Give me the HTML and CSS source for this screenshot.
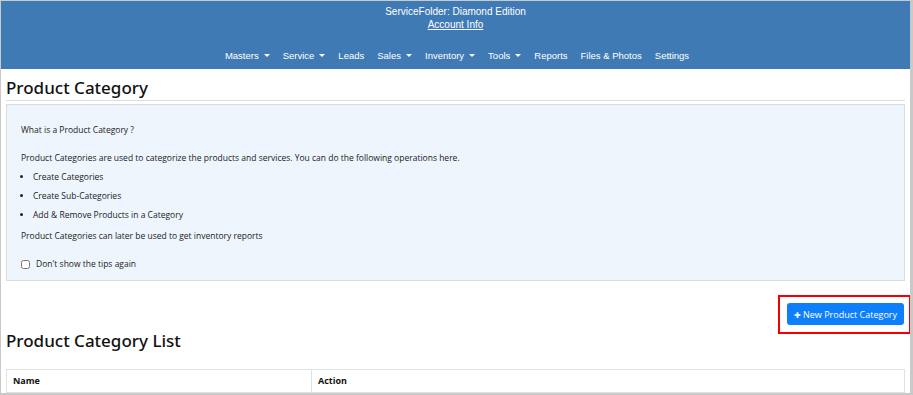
FILE: index.html
```html
<!DOCTYPE html>
<html lang="en">
<head>
    <meta charset="UTF-8">
    <meta name="viewport" content="width=device-width, initial-scale=1.0">
    <title>Product Category</title>
    <link rel="stylesheet" href="styles.css">
</head>
<body>
    <div class="frame">
        <header class="top-bar">
            <div class="brand">ServiceFolder: Diamond Edition</div>
            <a class="account-link" href="#">Account Info</a>
            <nav class="main-nav">
                <a href="#" class="dropdown">Masters</a>
                <a href="#" class="dropdown">Service</a>
                <a href="#">Leads</a>
                <a href="#" class="dropdown">Sales</a>
                <a href="#" class="dropdown">Inventory</a>
                <a href="#" class="dropdown">Tools</a>
                <a href="#">Reports</a>
                <a href="#">Files &amp; Photos</a>
                <a href="#">Settings</a>
            </nav>
        </header>

        <div class="content">
            <h2 class="page-title">Product Category</h2>

            <div class="tips-box">
                <p>What is a Product Category ?</p>
                <p class="intro">Product Categories are used to categorize the products and services. You can do the following operations here.</p>
                <ul>
                    <li>Create Categories</li>
                    <li>Create Sub-Categories</li>
                    <li>Add &amp; Remove Products in a Category</li>
                </ul>
                <p>Product Categories can later be used to get inventory reports</p>
                <label class="tips-check">
                    <input type="checkbox"> Don't show the tips again
                </label>
            </div>

            <div class="actions">
                <button class="btn-new"><span class="plus">&#10010;</span> New Product Category</button>
            </div>

            <h2 class="list-title">Product Category List</h2>

            <table class="list-table">
                <thead>
                    <tr>
                        <th class="col-name">Name</th>
                        <th>Action</th>
                    </tr>
                </thead>
            </table>
        </div>
    </div>
</body>
</html>
```

FILE: styles.css
```css
html, body {
    margin: 0;
    height: 100%;
    overflow: hidden;
}

body {
    font-family: "Open Sans", "Noto Sans", sans-serif;
    color: #212529;
    background: #c9c9c9;
}

.frame {
    margin: 1px 3px 2px 1px;
    height: calc(100% - 3px);
    background: white;
    overflow: hidden;
}

/* Top blue bar */
.top-bar {
    background-color: #3f7ab5;
    height: 68px;
    text-align: center;
    color: white;
    font-family: "Liberation Sans", Arial, sans-serif;
    font-size: 10px;
    padding-top: 4px;
    box-sizing: border-box;
}

.brand {
    line-height: 13px;
}

.account-link {
    display: inline-block;
    color: white;
    line-height: 13px;
}

.main-nav {
    display: flex;
    justify-content: center;
    gap: 13px;
    margin-top: 19px;
    padding-left: 3px;
    font-size: 9.5px;
}

.main-nav a {
    color: white;
    text-decoration: none;
}

.main-nav .dropdown::after {
    content: "";
    display: inline-block;
    margin-left: 5px;
    vertical-align: 2px;
    border-top: 3px solid white;
    border-left: 3px solid transparent;
    border-right: 3px solid transparent;
}

/* Page content */
.content {
    padding: 0 5px;
}

.page-title,
.list-title {
    font-family: "Noto Sans", sans-serif;
    font-weight: 500;
    font-size: 17px;
    line-height: 24px;
    margin: 0;
    color: #111;
}

.page-title {
    padding-top: 7px;
    border-bottom: 1px solid #ddd;
}

.tips-box {
    margin-top: 3px;
    background: #eef5fd;
    border: 1px solid #dcdcdc;
    padding: 19px 14px 10px;
    font-size: 8.5px;
    line-height: 12px;
    color: #222;
}

.tips-box p {
    margin: 0;
}

.tips-box .intro {
    margin-top: 16px;
}

.tips-box ul {
    margin: 7px 0 9px;
    padding-left: 12px;
}

.tips-box li + li {
    margin-top: 7px;
}

.tips-check {
    display: flex;
    align-items: center;
    gap: 4px;
    margin-top: 16px;
}

.tips-check input {
    width: 9px;
    height: 9px;
    margin: 0 2px 0 0;
}

.actions {
    display: flex;
    justify-content: flex-end;
    margin-top: 22px;
    padding-right: 1px;
}

.btn-new {
    position: relative;
    height: 22px;
    background: #0d7ffb;
    color: white;
    border: none;
    border-radius: 3px;
    font-family: "Open Sans", sans-serif;
    font-size: 9px;
    padding: 0 7px;
}

/* red annotation frame drawn around the button */
.btn-new::after {
    content: "";
    position: absolute;
    top: -8px;
    bottom: -9px;
    left: -9px;
    right: -7px;
    border: 2px solid #f00000;
}

.btn-new .plus {
    font-size: 8px;
}

.list-title {
    margin-top: 4px;
    margin-bottom: 16px;
}

.list-table {
    width: 100%;
    border-collapse: collapse;
    font-size: 9px;
}

.list-table th {
    text-align: left;
    border: 1px solid #dee2e6;
    padding: 5px 6px;
    line-height: 12px;
    font-weight: bold;
    color: #111;
}

.list-table .col-name {
    width: 292px;
}
```
